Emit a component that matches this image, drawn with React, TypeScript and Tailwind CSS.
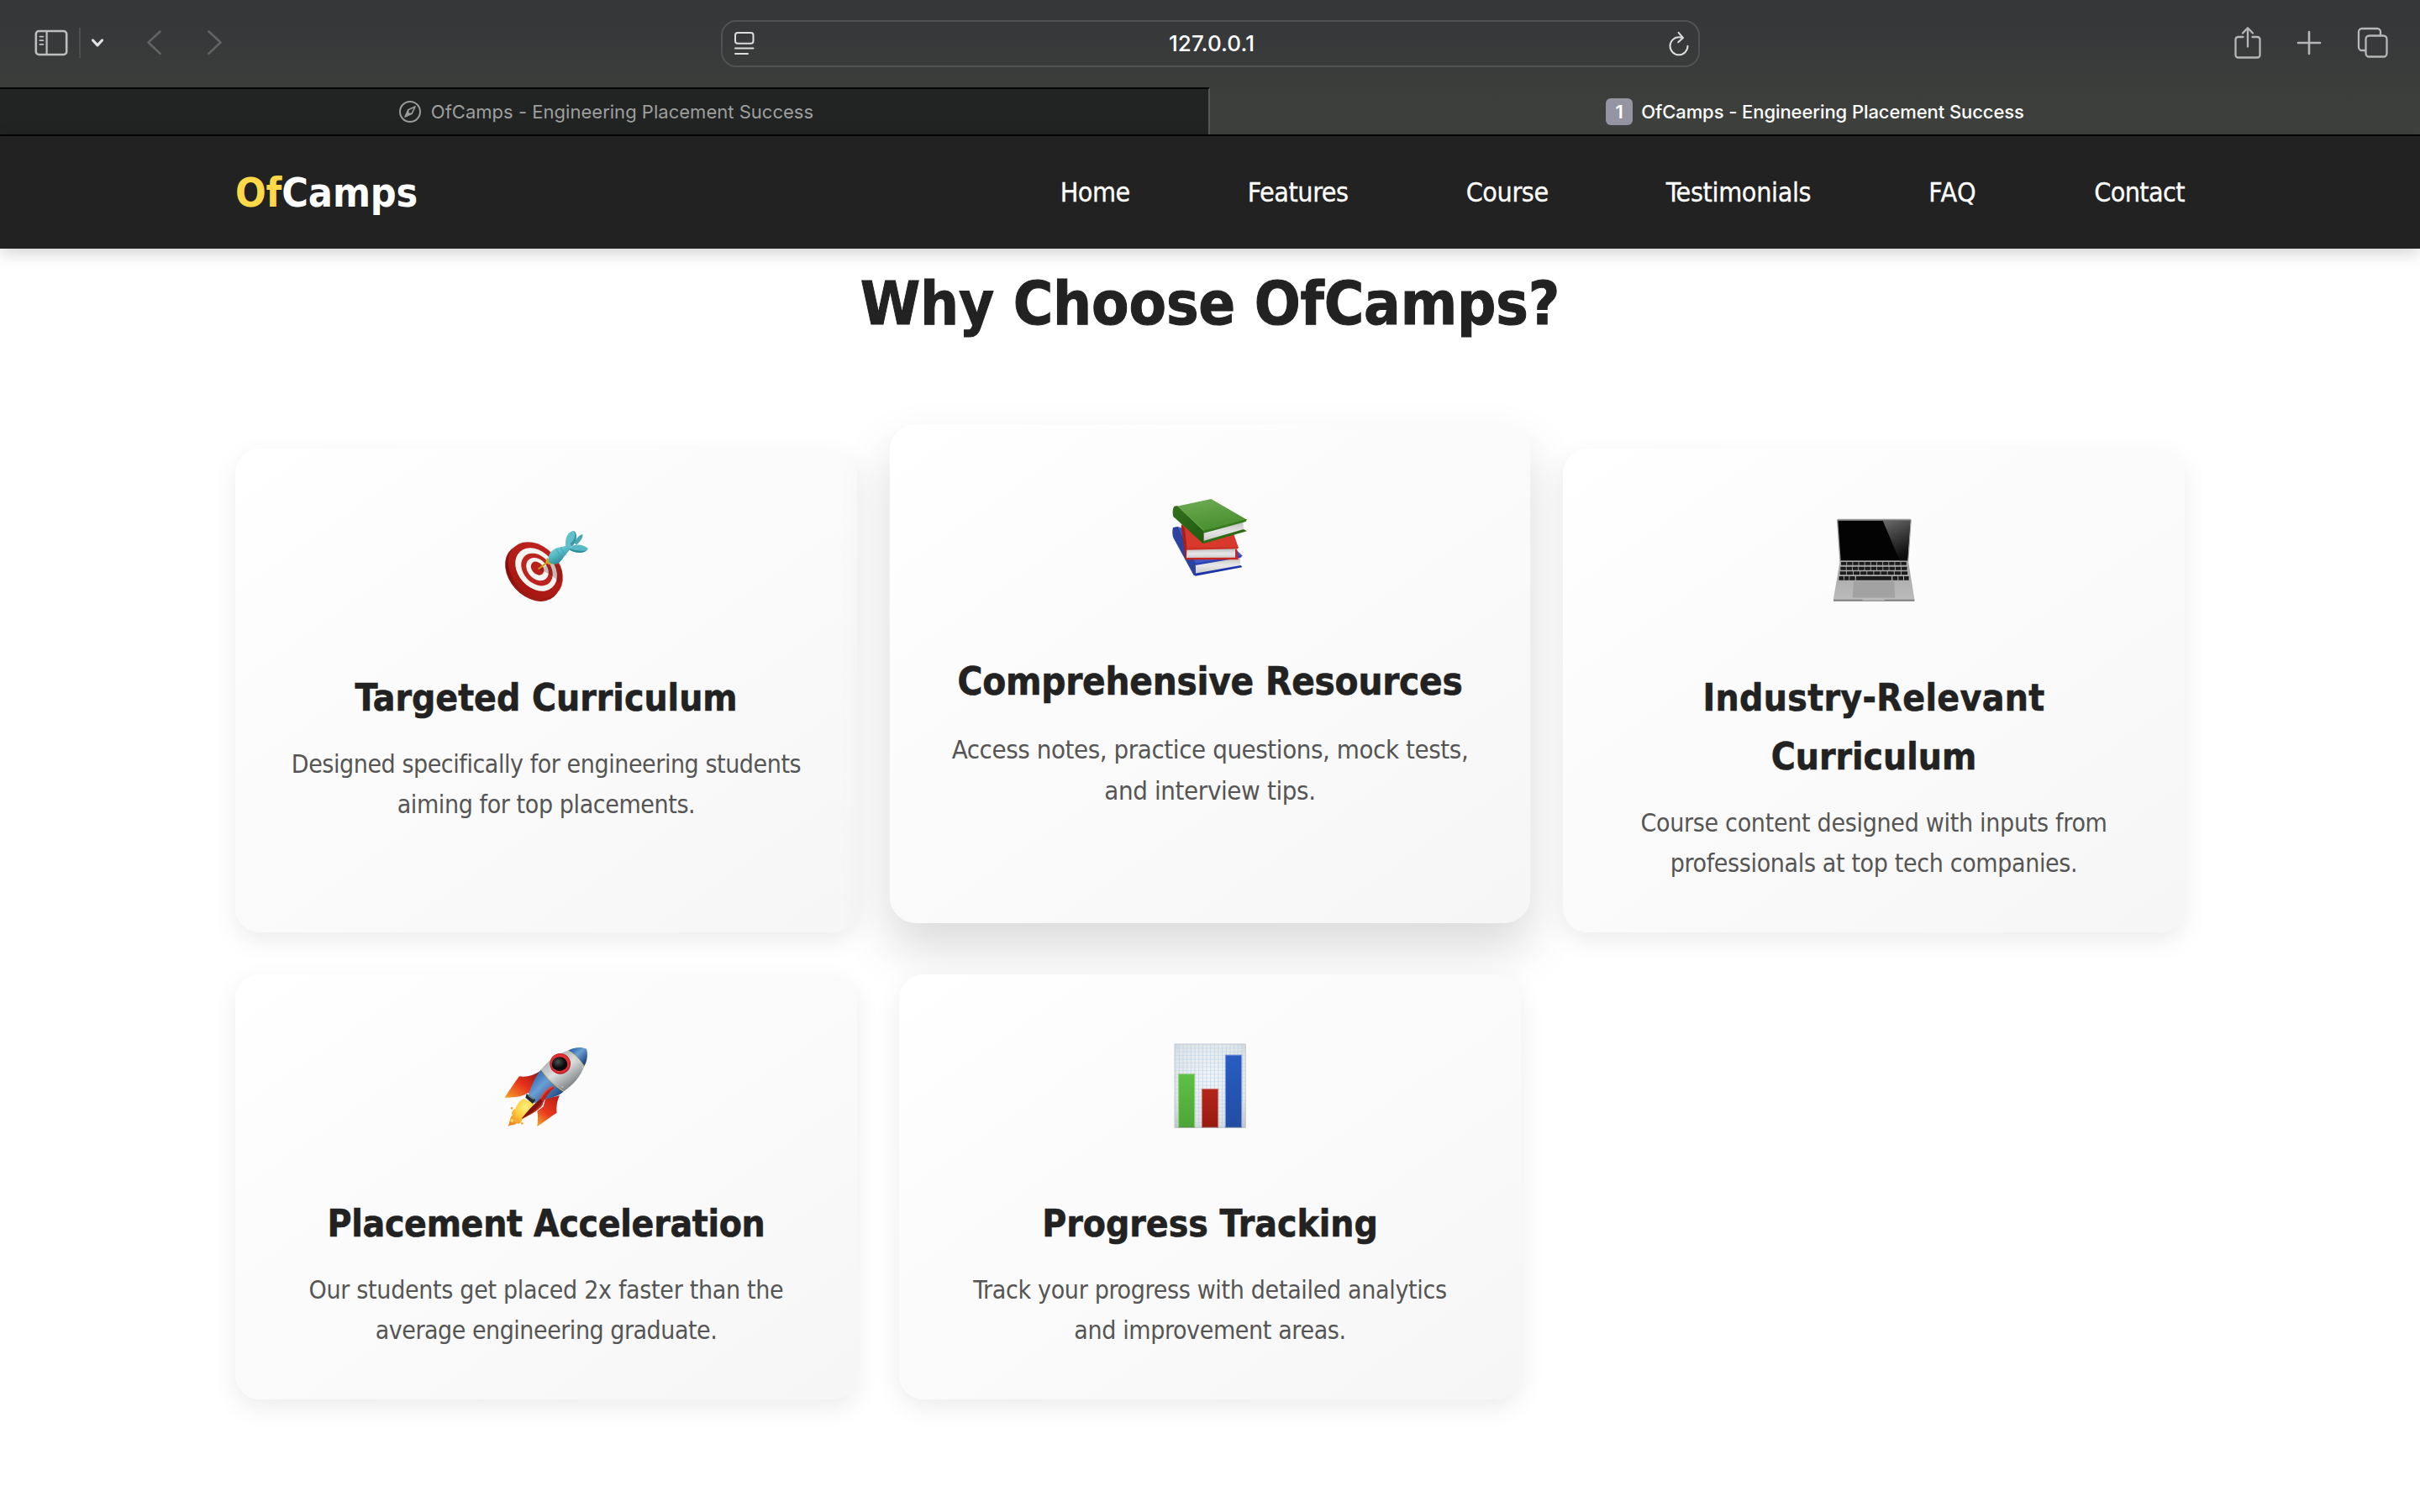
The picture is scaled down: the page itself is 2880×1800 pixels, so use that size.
import type { ReactNode } from "react";

function SidebarIcon() {
  return (
    <svg width="40" height="32" viewBox="0 0 40 32" fill="none" stroke="#bdbfbe" strokeWidth="2.6" strokeLinecap="round">
      <rect x="1.8" y="2" width="36.4" height="28" rx="3.6" />
      <path d="M14.6 2V30" strokeWidth="2.2" />
      <path d="M6.4 8.6H10.4M6.4 13.2H10.4M6.4 17.8H10.4" strokeWidth="1.8" />
    </svg>
  );
}

function Compass() {
  return (
    <svg width="28" height="28" viewBox="0 0 28 28" fill="none" stroke="#9a9c9b" strokeWidth="2">
      <circle cx="14" cy="14" r="12" />
      <path d="M20 8L16.2 16.2L8 20L11.8 11.8Z" strokeWidth="1.7" strokeLinejoin="round" />
      <path d="M11.8 11.8L16.2 16.2L8 20Z" fill="#9a9c9b" stroke="none" />
      <circle cx="14" cy="14" r="1.6" fill="#222423" stroke="none" />
    </svg>
  );
}

function ReaderIcon() {
  return (
    <svg width="26" height="30" viewBox="0 0 26 30" fill="none" stroke="#dcdddd" strokeWidth="2" strokeLinecap="round">
      <rect x="2" y="2" width="21.5" height="12.8" rx="3" />
      <path d="M2 20.6H23.5M2 27H17" />
    </svg>
  );
}

function ReloadIcon() {
  return (
    <svg width="26" height="30" viewBox="0 0 26 30" fill="none" stroke="#dcdddd" strokeWidth="2" strokeLinecap="round" strokeLinejoin="round">
      <path d="M23.5 17.8A10.5 10.5 0 1 1 13 7.3C14.6 7.3 16.2 7.6 17.6 8.3" />
      <path d="M12.6 1.8L17.9 8L12.2 13.3" />
    </svg>
  );
}

function ShareIcon() {
  return (
    <svg className="-mt-[3px]" width="32" height="40" viewBox="0 0 32 40" fill="none" stroke="#b6b7b8" strokeWidth="2.3" strokeLinecap="round" strokeLinejoin="round">
      <path d="M10.5 13H4.5A3 3 0 0 0 1.5 16V34.5A3 3 0 0 0 4.5 37.5H27.5A3 3 0 0 0 30.5 34.5V16A3 3 0 0 0 27.5 13H21.5" />
      <path d="M16 24.5V2.5M10 8.5L16 2.3L22 8.5" />
    </svg>
  );
}

function TabsIcon() {
  return (
    <svg className="-mt-[3px] ml-[42px]" width="38" height="38" viewBox="0 0 38 38" fill="none" stroke="#b6b7b8" strokeWidth="2.3" strokeLinecap="round">
      <path d="M28 9.8V6A4 4 0 0 0 24 2H6A4 4 0 0 0 2 6V24A4 4 0 0 0 6 28H9.6" />
      <rect x="10.5" y="10.5" width="25" height="25" rx="4" />
    </svg>
  );
}

function TargetArt() {
  return (
    <svg className="size-[140px]" viewBox="0 -30 420 420">
      <defs>
        <linearGradient id="tRed" x1="0" y1="0" x2="0.4" y2="1">
          <stop offset="0" stopColor="#c12520" />
          <stop offset="1" stopColor="#a91813" />
        </linearGradient>
        <linearGradient id="tEdge" x1="0" y1="0" x2="1" y2="1">
          <stop offset="0" stopColor="#b5221c" />
          <stop offset="0.5" stopColor="#7d0f0a" />
          <stop offset="1" stopColor="#b3201a" />
        </linearGradient>
        <linearGradient id="tDart" x1="0" y1="0" x2="0.6" y2="1">
          <stop offset="0" stopColor="#7fd3dc" />
          <stop offset="0.45" stopColor="#5bbfca" />
          <stop offset="1" stopColor="#23808d" />
        </linearGradient>
      </defs>
      <ellipse cx="162" cy="216" rx="114" ry="84" transform="rotate(48 162 216)" fill="url(#tEdge)" />
      <g transform="rotate(48 172 206)">
        <ellipse cx="172" cy="206" rx="112" ry="84" fill="url(#tRed)" />
        <ellipse cx="172" cy="203" rx="86" ry="64" fill="#f4f4f0" />
        <ellipse cx="174" cy="201" rx="65" ry="48" fill="#bd241f" />
        <ellipse cx="174" cy="199" rx="46" ry="34" fill="#f7f6f2" />
        <ellipse cx="172" cy="197" rx="27" ry="20" fill="#b7201b" />
      </g>
      <path d="M183 204L226 182L262 190C270 210 268 234 256 256C246 232 226 220 183 204Z" fill="#4a1512" opacity="0.26" />
      <path d="M184 201L222 172" stroke="#c99b16" strokeWidth="6" strokeLinecap="round" />
      <path d="M213 161L236 183L219 186L208 176Z" fill="#d9a916" />
      <path d="M311 110C316 92 330 80 340 78C343 88 334 102 318 116Z" fill="#4ba9b5" />
      <path d="M280 124C275 92 287 68 309 66C322 76 321 100 300 122L290 128Z" fill="#62bec9" />
      <path d="M296 112C308 100 318 84 309 66C322 74 322 104 302 122Z" fill="#3d98a5" />
      <path d="M219 178C214 150 228 132 254 125L292 118L300 130C280 144 272 166 256 180C244 188 230 186 219 178Z" fill="url(#tDart)" />
      <path d="M246 129C252 142 260 158 270 166M262 124C267 136 273 146 283 154" stroke="#3b9aa6" strokeWidth="2" fill="none" />
      <path d="M294 128C308 112 340 110 360 130C348 148 318 146 294 134Z" fill="#58b8c4" />
      <path d="M294 130C316 138 342 140 356 134C344 148 316 146 294 134Z" fill="#2f8c99" />
    </svg>
  );
}

function BooksArt() {
  return (
    <svg className="size-[140px]" viewBox="-6.3 9.9 432.6 432.6">
      <defs>
        <linearGradient id="bGreen" x1="0.2" y1="0" x2="0.6" y2="1">
          <stop offset="0" stopColor="#6dab52" />
          <stop offset="1" stopColor="#468c2d" />
        </linearGradient>
        <linearGradient id="bPage" x1="0" y1="0" x2="0" y2="1">
          <stop offset="0" stopColor="#bdbdbd" />
          <stop offset="0.5" stopColor="#e8e8e8" />
          <stop offset="1" stopColor="#c9c9c9" />
        </linearGradient>
        <linearGradient id="bSpine" x1="0" y1="0" x2="1" y2="1">
          <stop offset="0" stopColor="#35701f" />
          <stop offset="1" stopColor="#1f5a0e" />
        </linearGradient>
      </defs>
      <path d="M78 176L94 170L300 250L326 275L158 306Z" fill="#3f58c6" />
      <path d="M78 174C74 190 76 204 80 212L152 345L160 346V304L94 172Z" fill="#2b429f" />
      <path d="M158 304L318 278V312L160 340Z" fill="url(#bPage)" />
      <path d="M154 302L326 273L320 281L158 309Z" fill="#2b43b4" />
      <path d="M156 338L320 309L325 316L158 347Z" fill="#1d35a8" />
      <path d="M108 164L292 190L312 247L128 252Z" fill="#d8392d" />
      <path d="M108 162C106 174 108 184 110 192L122 284L128 288V250L120 176Z" fill="#a82119" />
      <path d="M127 250H304V283L126 284Z" fill="url(#bPage)" />
      <path d="M124 246L312 243L309 250L127 254Z" fill="#cf3025" />
      <path d="M123 282L300 281V252L306 250L311 289H126Z" fill="#c8281e" />
      <path d="M92 98L214 72L342 146L184 187Z" fill="url(#bGreen)" />
      <path d="M80 102C76 112 76 128 80 136L184 230L188 228V188L94 97C88 97 82 98 80 102Z" fill="url(#bSpine)" />
      <path d="M94 97L190 186" stroke="#6aa64f" strokeWidth="3" />
      <path d="M188 192L328 153L330 184L188 224Z" fill="url(#bPage)" />
      <path d="M184 186L342 144L338 153L188 194Z" fill="#367a1e" />
      <path d="M186 222L330 180L342 187L188 231Z" fill="#2c6d16" />
      <path d="M190 202L328 164M190 212L328 174" stroke="#cfcfcf" strokeWidth="1.5" />
    </svg>
  );
}

const keyRows = [
  { y: 207, h: 11, x0: 93, x1: 329, n: 11 },
  { y: 224, h: 12, x0: 91, x1: 331, n: 11 },
  { y: 241, h: 12, x0: 89, x1: 333, n: 10 },
];

function LaptopArt() {
  return (
    <svg className="size-[140px]" viewBox="0 0 420 420">
      <defs>
        <linearGradient id="lGlare" x1="0" y1="0" x2="0.3" y2="1">
          <stop offset="0" stopColor="#6a6a6a" />
          <stop offset="1" stopColor="#0d0d0d" />
        </linearGradient>
        <linearGradient id="lBody" x1="0" y1="0" x2="0" y2="1">
          <stop offset="0" stopColor="#a4a4a4" />
          <stop offset="1" stopColor="#bcbcbc" />
        </linearGradient>
      </defs>
      <path d="M78 58Q78 53 84 53H338Q344 53 344 58L334 206H88Z" fill="#9d9d9d" />
      <path d="M82 59H340L330 202H92Z" fill="#030303" />
      <path d="M242 59H340L330 202H302Z" fill="url(#lGlare)" />
      <path d="M89 204H333L355 338V346H66V338Z" fill="url(#lBody)" />
      <path d="M66 341H166L172 344H246L252 341H355V347H66Z" fill="#7d7d7d" />
      <path d="M139 277H281L285 334H135Z" fill="#a2a2a2" stroke="#979797" />
      {keyRows.map((row) => {
        const pitch = (row.x1 - row.x0) / row.n;
        return Array.from({ length: row.n }, (_, i) => (
          <rect key={`${row.y}-${i}`} x={row.x0 + i * pitch} y={row.y} width={pitch - 2.6} height={row.h} rx="1.5" fill="#1c1c1c" />
        ));
      })}
      <path d="M86 258H102V272H85ZM105 258H121V272H104ZM124 258H143V272H123ZM147 258H273V272H146ZM277 258H295V272H277ZM298 258H315V272H298ZM318 258H335V272H318Z" fill="#1c1c1c" />
    </svg>
  );
}

function RocketArt() {
  return (
    <svg className="size-[140px]" viewBox="0 -12 420 420">
      <defs>
        <linearGradient id="rBlue" x1="0.1" y1="0.2" x2="0.8" y2="0.9">
          <stop offset="0" stopColor="#2f66a8" />
          <stop offset="0.4" stopColor="#6c9fd6" />
          <stop offset="1" stopColor="#1e4580" />
        </linearGradient>
        <linearGradient id="rBody" x1="0.2" y1="0.1" x2="0.8" y2="0.9">
          <stop offset="0" stopColor="#a4a8ab" />
          <stop offset="0.45" stopColor="#dcdede" />
          <stop offset="1" stopColor="#6d7376" />
        </linearGradient>
        <linearGradient id="rFin" x1="1" y1="0" x2="0" y2="1">
          <stop offset="0" stopColor="#8c1410" />
          <stop offset="0.5" stopColor="#e8301b" />
          <stop offset="1" stopColor="#f4a428" />
        </linearGradient>
        <linearGradient id="rFin2" x1="0.8" y1="0" x2="0.2" y2="1">
          <stop offset="0" stopColor="#b91d14" />
          <stop offset="0.6" stopColor="#ea3a1e" />
          <stop offset="1" stopColor="#f0992a" />
        </linearGradient>
        <radialGradient id="rFire" cx="0.65" cy="0.3" r="0.8">
          <stop offset="0" stopColor="#fff27a" />
          <stop offset="0.5" stopColor="#fbc93a" />
          <stop offset="1" stopColor="#ee8420" />
        </radialGradient>
        <radialGradient id="rGlass" cx="0.4" cy="0.35" r="0.7">
          <stop offset="0" stopColor="#4c5254" />
          <stop offset="0.6" stopColor="#0b0c0d" />
        </radialGradient>
      </defs>
      <path d="M190 134C166 150 140 158 114 154C98 176 78 204 62 230C90 230 112 228 128 222L144 214L160 216Z" fill="url(#rFin)" />
      <path d="M130 234C112 242 106 256 100 270C88 276 84 284 90 292C80 300 82 312 74 333C90 324 98 330 106 322C118 326 122 316 126 306C144 300 162 284 170 252Z" fill="url(#rFire)" />
      <circle cx="87" cy="268" r="4" fill="#f2a53a" />
      <circle cx="124" cy="322" r="4" fill="#f2a53a" />
      <circle cx="88" cy="312" r="6" fill="#fbd35a" />
      <circle cx="104" cy="312" r="7" fill="#f6ad36" />
      <path d="M258 222C242 228 222 230 208 232L200 262L178 278C182 294 180 314 178 333C200 318 224 300 248 284C246 264 248 244 258 222Z" fill="url(#rFin2)" />
      <path d="M192 130L272 208C258 222 236 230 214 234L168 250L146 224C156 190 170 156 192 130Z" fill="url(#rBlue)" />
      <path d="M288 62C250 74 216 98 192 130C212 160 242 190 272 208C308 184 334 152 346 118C330 94 312 74 288 62Z" fill="url(#rBody)" />
      <path d="M288 62C310 50 336 48 354 56C360 76 356 100 346 118C330 94 312 74 288 62Z" fill="url(#rBlue)" />
      <path d="M192 130C212 160 242 190 272 208" fill="none" stroke="#d3bb52" strokeWidth="3" />
      <path d="M288 62C312 74 330 94 346 118" fill="none" stroke="#cdb45a" strokeWidth="2.5" />
      <circle cx="260" cy="109" r="37" fill="#b3161a" />
      <circle cx="260" cy="108" r="34" fill="#e33135" />
      <ellipse cx="258" cy="110" rx="28" ry="25" fill="url(#rGlass)" />
      {[[216, 138], [246, 166], [268, 192], [296, 72], [319, 94], [341, 122]].map(([x, y]) => (
        <circle key={x} cx={x} cy={y} r="2.6" fill="#f2f2f2" stroke="#85898b" />
      ))}
      <path d="M140 216L172 238L162 252L136 230Z" fill="#23292e" />
      <path d="M146 222L166 236" stroke="#77828a" strokeWidth="5" />
      <path d="M234 190C214 200 200 214 190 234C164 256 140 282 122 306C154 292 182 276 196 258C204 234 220 212 238 196Z" fill="#c02219" />
      <path d="M122 306C140 282 164 256 190 234L196 244C180 270 150 292 122 306Z" fill="#7e130e" />
      <path d="M234 190C214 200 200 214 190 234" fill="none" stroke="#ee4632" strokeWidth="5" />
    </svg>
  );
}

function ChartArt() {
  return (
    <svg className="size-[140px]" viewBox="0 -12 420 420">
      <defs>
        <radialGradient id="cPaper" cx="0.5" cy="0.4" r="0.75">
          <stop offset="0" stopColor="#f4f6f8" />
          <stop offset="0.7" stopColor="#e2e4e6" />
          <stop offset="1" stopColor="#c4c4c4" />
        </radialGradient>
        <linearGradient id="cGreen" x1="0" y1="0" x2="0" y2="1">
          <stop offset="0" stopColor="#5cc043" />
          <stop offset="1" stopColor="#4da636" />
        </linearGradient>
        <linearGradient id="cRed" x1="0" y1="0" x2="0" y2="1">
          <stop offset="0" stopColor="#b3271c" />
          <stop offset="1" stopColor="#98190f" />
        </linearGradient>
        <linearGradient id="cBlue" x1="0" y1="0" x2="0" y2="1">
          <stop offset="0" stopColor="#285dc2" />
          <stop offset="1" stopColor="#224da3" />
        </linearGradient>
      </defs>
      <rect x="83" y="38" width="255" height="301" fill="url(#cPaper)" />
      {Array.from({ length: 18 }, (_, i) => (
        <path key={`v${i}`} d={`M${86 + i * 14} 38V339`} stroke="#b9d6ee" strokeWidth="2.6" opacity="0.85" />
      ))}
      {Array.from({ length: 23 }, (_, i) => (
        <path key={`h${i}`} d={`M83 ${40 + i * 13.3}H338`} stroke="#b9d6ee" strokeWidth="2.2" opacity="0.7" />
      ))}
      <rect x="84" y="39" width="253" height="299" fill="none" stroke="#c4c8cc" strokeWidth="2" />
      <rect x="98" y="146" width="57" height="190" fill="url(#cGreen)" stroke="#8fce80" strokeWidth="3" />
      <rect x="181" y="199" width="58" height="137" fill="url(#cRed)" stroke="#d07c75" strokeWidth="3" />
      <rect x="265" y="78" width="58" height="258" fill="url(#cBlue)" stroke="#7c9cdb" strokeWidth="3" />
      <path d="M97 335H156M180 335H240M264 335H324" stroke="#000" strokeOpacity="0.22" strokeWidth="4" />
    </svg>
  );
}

type Line = [text: string, tracking: string];

type Feature = {
  art: ReactNode;
  title: Line[];
  body: Line[];
  className: string;
};

const baseShadow = "relative shadow-[0_10px_30px_rgba(0,0,0,0.08)]";

const features: Feature[] = [
  {
    art: <TargetArt />,
    title: [["Targeted Curriculum", "tracking-normal"]],
    body: [
      ["Designed specifically for engineering students", "tracking-[-0.44px]"],
      ["aiming for top placements.", "tracking-[-0.4px]"],
    ],
    className: baseShadow,
  },
  {
    art: <BooksArt />,
    title: [["Comprehensive Resources", "tracking-[-0.23px]"]],
    body: [
      ["Access notes, practice questions, mock tests,", "tracking-[-0.4px]"],
      ["and interview tips.", "tracking-[-0.36px]"],
    ],
    className: "relative -translate-y-5 scale-[1.03] shadow-[0_29px_58px_rgba(0,0,0,0.15)]",
  },
  {
    art: <LaptopArt />,
    title: [
      ["Industry-Relevant", "tracking-[0.36px]"],
      ["Curriculum", "tracking-normal"],
    ],
    body: [
      ["Course content designed with inputs from", "tracking-[-0.3px]"],
      ["professionals at top tech companies.", "tracking-[-0.36px]"],
    ],
    className: baseShadow,
  },
  {
    art: <RocketArt />,
    title: [["Placement Acceleration", "tracking-[-0.3px]"]],
    body: [
      ["Our students get placed 2x faster than the", "tracking-[-0.31px]"],
      ["average engineering graduate.", "tracking-[-0.48px]"],
    ],
    className: baseShadow,
  },
  {
    art: <ChartArt />,
    title: [["Progress Tracking", "tracking-normal"]],
    body: [
      ["Track your progress with detailed analytics", "tracking-[-0.33px]"],
      ["and improvement areas.", "tracking-[-0.38px]"],
    ],
    className: baseShadow,
  },
];

function Lines({ lines }: { lines: Line[] }) {
  return (
    <>
      {lines.map(([text, tracking]) => (
        <span key={text} className={`block whitespace-nowrap ${tracking}`}>
          {text}
        </span>
      ))}
    </>
  );
}

function FeatureCard({ art, title, body, className }: Feature) {
  return (
    <article
      className={`flex flex-col items-center rounded-[30px] bg-[linear-gradient(145deg,#ffffff,#f6f6f6)] pt-[66px] pb-[58px] text-center ${className}`}
    >
      {art}
      <h3 className="mt-14 text-[44px] leading-[70px] font-bold text-[#222222] [-webkit-text-stroke:0.6px_#222222]">
        <Lines lines={title} />
      </h3>
      <p className="mt-5 text-[30px] leading-[48px] text-[#555555]">
        <Lines lines={body} />
      </p>
    </article>
  );
}

const navItems: Line[] = [
  ["Home", "tracking-[-0.5px]"],
  ["Features", "tracking-[-0.45px]"],
  ["Course", "tracking-[-0.4px]"],
  ["Testimonials", "tracking-[-0.35px]"],
  ["FAQ", "tracking-[0.5px]"],
  ["Contact", "tracking-[-0.6px]"],
];

function BrowserChrome() {
  return (
    <header className="h-[162px] shrink-0 bg-[linear-gradient(180deg,#353638_0px,#38393a_50px,#3b3d3b_100px,#3f413f_160px)] font-['Inter',sans-serif]">
      <div className="flex h-[104px] items-center pr-[37px] pl-[41px]">
        <div className="-mt-[2px] flex w-[817px] items-center">
          <SidebarIcon />
          <span className="ml-[13px] h-9 w-[2px] bg-[#4d4f4f]" />
          <svg className="ml-[12px]" width="16" height="12" viewBox="0 0 16 12" fill="none" stroke="#e2e3e3" strokeWidth="3.2" strokeLinecap="round" strokeLinejoin="round">
            <path d="M2.5 3L8 8.8L13.5 3" />
          </svg>
          <svg className="ml-[50px]" width="20" height="32" viewBox="0 0 20 32" fill="none" stroke="#626464" strokeWidth="2.6" strokeLinecap="round" strokeLinejoin="round">
            <path d="M16.5 2.5L2.5 15.5L16.5 28.8" />
          </svg>
          <svg className="ml-[52px]" width="20" height="32" viewBox="0 0 20 32" fill="none" stroke="#626464" strokeWidth="2.6" strokeLinecap="round" strokeLinejoin="round">
            <path d="M2.5 2.5L16.5 15.5L2.5 28.8" />
          </svg>
        </div>
        <div className="flex h-14 w-[1165px] items-center justify-between rounded-[18px] border-2 border-[#505253] pr-[10px] pl-[13px]">
          <ReaderIcon />
          <span className="text-[26px] leading-none font-medium tracking-[0.1px] text-white">127.0.0.1</span>
          <ReloadIcon />
        </div>
        <div className="ml-auto flex items-center">
          <ShareIcon />
          <svg className="-mt-[3px] ml-[42px]" width="30" height="30" viewBox="0 0 30 30" fill="none" stroke="#b6b7b8" strokeWidth="2.6" strokeLinecap="round">
            <path d="M15 2V28M2 15H28" />
          </svg>
          <TabsIcon />
        </div>
      </div>
      <div className="flex h-[58px] border-b-2 border-[#050505]">
        <div className="flex w-[1440px] items-center justify-center border-t-2 border-r-2 border-t-[#050505] border-r-[#565857] bg-[#222423] pl-1">
          <Compass />
          <span className="ml-[11px] text-[22px] leading-none tracking-[0.02px] text-[#9d9f9e]">OfCamps - Engineering Placement Success</span>
        </div>
        <div className="flex flex-1 items-center justify-center pt-px">
          <span className="flex size-8 items-center justify-center rounded-md bg-[#9594a2] text-[22px] leading-none font-semibold text-white">1</span>
          <span className="ml-[10px] text-[22px] leading-none font-medium tracking-[-0.08px] text-white">
            OfCamps - Engineering Placement Success
          </span>
        </div>
      </div>
    </header>
  );
}

export default function App() {
  return (
    <div className="flex h-[1800px] w-[2880px] flex-col overflow-hidden bg-white font-['DejaVu_Sans_Condensed','DejaVu_Sans',sans-serif]">
      <BrowserChrome />
      <nav className="relative flex h-[134px] shrink-0 items-center justify-between bg-[#222222] px-[280px] shadow-[0_4px_20px_rgba(0,0,0,0.2)]">
        <span className="text-[48px] leading-none font-bold tracking-[-0.1px] text-white">
          <span className="text-[#fdd949]">Of</span>Camps
        </span>
        <ul className="flex items-center gap-[140px] text-[32px] leading-none text-white [-webkit-text-stroke:0.3px_#ffffff]">
          {navItems.map(([label, tracking]) => (
            <li key={label} className={tracking}>
              {label}
            </li>
          ))}
        </ul>
      </nav>
      <main className="px-[280px] pt-[7px]">
        <h2 className="text-center text-[72px] leading-[116px] font-bold tracking-[-0.1px] text-[#222222] [-webkit-text-stroke:1px_#222222]">
          Why Choose OfCamps?
        </h2>
        <div className="mt-[115px] grid grid-cols-3 gap-[50px]">
          {features.map((feature) => (
            <FeatureCard key={feature.title[0][0]} {...feature} />
          ))}
        </div>
      </main>
    </div>
  );
}
